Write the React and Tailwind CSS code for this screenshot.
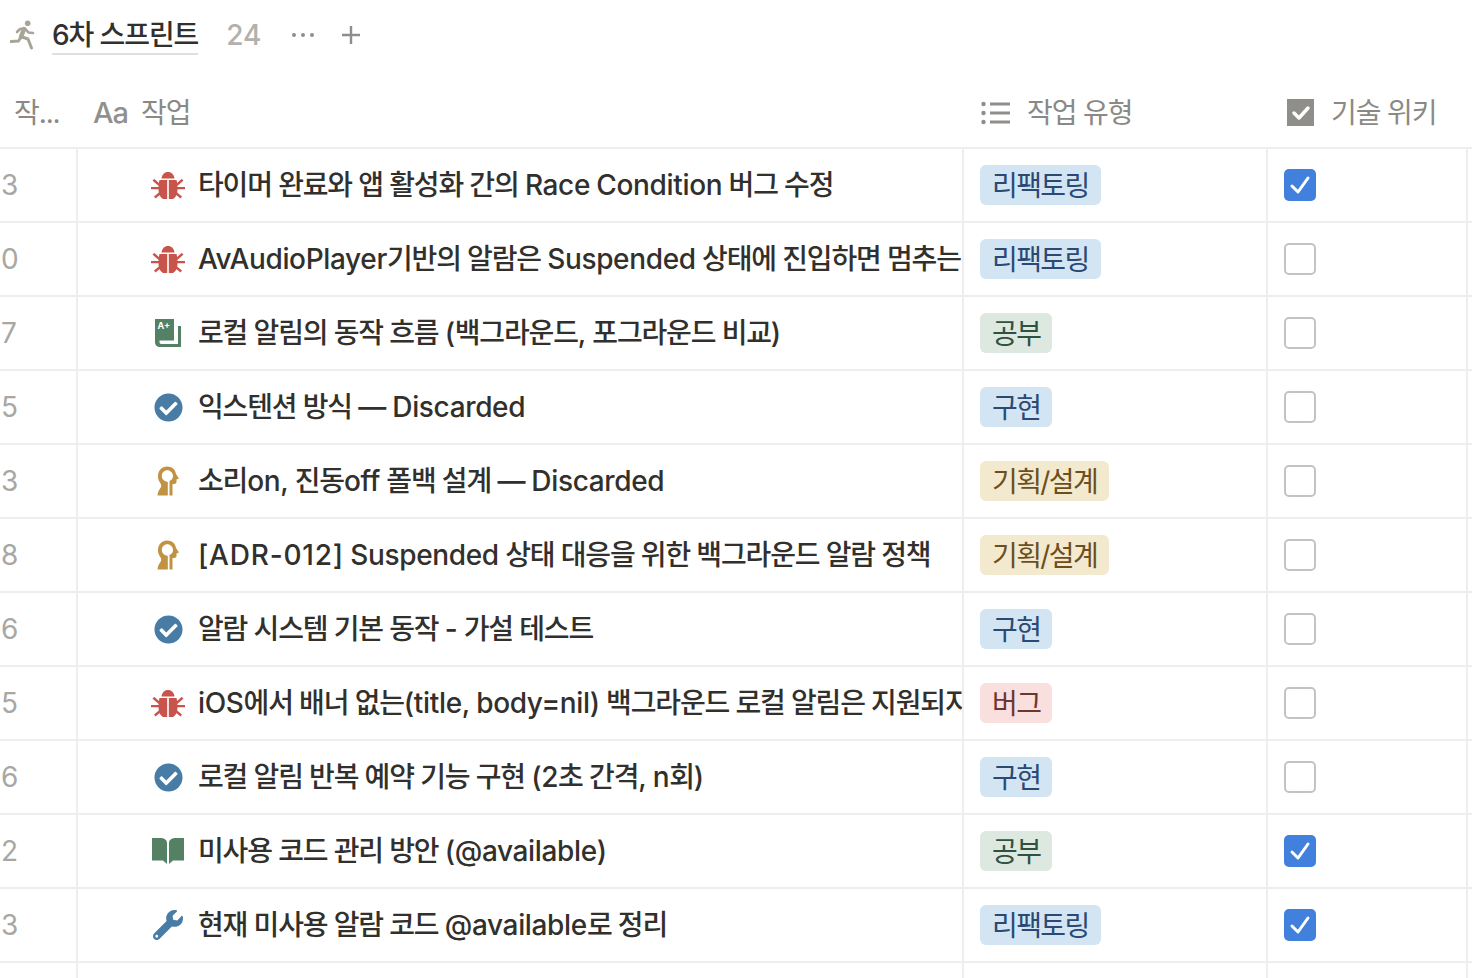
import { FaCheckCircle, FaWrench } from 'react-icons/fa';

const TAGS = {
  refactor: { label: '리팩토링', cls: 'bg-[#d3e5f3] text-[#2b4a73]' },
  study: { label: '공부', cls: 'bg-[#dde8e1] text-[#2f5140]' },
  impl: { label: '구현', cls: 'bg-[#d3e5f3] text-[#2b4a73]' },
  plan: { label: '기획/설계', cls: 'bg-[#f3e9cf] text-[#6b4f1d]' },
  bug: { label: '버그', cls: 'bg-[#f9e0de] text-[#6e3630]' },
};

const ROWS = [
  { num: '3', icon: 'bug', title: '타이머 완료와 앱 활성화 간의 Race Condition 버그 수정', tag: 'refactor', checked: true },
  { num: '0', icon: 'bug', title: 'AvAudioPlayer기반의 알람은 Suspended 상태에 진입하면 멈추는', tag: 'refactor' },
  { num: '7', icon: 'grade', title: '로컬 알림의 동작 흐름 (백그라운드, 포그라운드 비교)', tag: 'study' },
  { num: '5', icon: 'done', title: '익스텐션 방식 — Discarded', tag: 'impl' },
  { num: '3', icon: 'head', title: '소리on, 진동off 폴백 설계 — Discarded', tag: 'plan' },
  { num: '8', icon: 'head', title: '[ADR-012] Suspended 상태 대응을 위한 백그라운드 알람 정책', tag: 'plan' },
  { num: '6', icon: 'done', title: '알람 시스템 기본 동작 - 가설 테스트', tag: 'impl' },
  { num: '5', icon: 'bug', title: 'iOS에서 배너 없는(title, body=nil) 백그라운드 로컬 알림은 지원되지', tag: 'bug' },
  { num: '6', icon: 'done', title: '로컬 알림 반복 예약 기능 구현 (2초 간격, n회)', tag: 'impl' },
  { num: '2', icon: 'book', title: '미사용 코드 관리 방안 (@available)', tag: 'study', checked: true },
  { num: '3', icon: 'wrench', title: '현재 미사용 알람 코드 @available로 정리', tag: 'refactor', checked: true },
];

// Korean runs tighter than latin in the original, so the runs get their own tracking
function Title({ text }) {
  const parts = text.split(/([A-Za-z0-9@[\]=,.()—-]+)/);
  return parts.map((part, i) => {
    if (i % 2 === 0) return <span key={i} className="tracking-[-1.15px]">{part}</span>;
    if (part.startsWith('[ADR')) return <span key={i} className="tracking-[0.8px]">{part}</span>;
    return <span key={i} className="tracking-[-0.35px]">{part}</span>;
  });
}

function BugIcon() {
  return (
    <svg viewBox="0 0 34 30" className="w-[34px] h-[30px] text-[#c9544b]" fill="currentColor">
      <path d="M10.500 8.500C11 4.500 13.500 2 17 2s6 2.500 6.500 6.500z" />
      <path d="M8.500 10h7.700v19H12c-2.800-1.500-4.500-5-4.500-9.500 0-3.500.3-7 1-9.500z" />
      <path d="M25.500 10h-7.700v19H22c2.800-1.500 4.500-5 4.500-9.500 0-3.500-.3-7-1-9.500z" />
      <path d="M8.500 13.500 3.500 9l-2 1.300 1.200 1.400L7.800 16zM25.500 13.500 30.500 9l2 1.300-1.200 1.400L26.200 16z" />
      <path d="M0 17h8v2.200H0zM26 17h8v2.200h-8z" />
      <path d="M8.500 22 3 26.500 4.500 28.500l5.500-4.500zM25.500 22l5.500 4.500-1.500 2-5.500-4.500z" />
    </svg>
  );
}

function GradeIcon() {
  return (
    <svg viewBox="0 0 28 30" className="w-[28px] h-[30px]">
      <path d="M1 1h19v21.500H5.500V24c0 1 .600 2 1.800 2H24V8h3v21H6.500C3 29 1 27 1 24z" fill="#548164" />
      <text x="3.500" y="11" fontSize="9" fontWeight="700" fill="#fff" fontFamily="Inter, sans-serif">A+</text>
    </svg>
  );
}

function HeadIcon() {
  return (
    <svg viewBox="0 0 23 30" className="w-[23px] h-[30px] text-[#c29243]" fill="currentColor">
      <path d="M10 .5C15 .5 18.500 3.500 19 8l3 4.500-2.500 1V16c0 1.300-1 2-2.500 2h-1.500v11.500h-3V15c2.500-1 3.500-2.800 3.500-5 0-3.200-2.800-5.700-5.500-5.700C7 4.300 4.800 6.800 4.800 10c0 2.200 1.200 4 3 5l3 1v13.500H.5c0-4 2.500-6.500 3.500-8.500.5-1.500 0-3-1-4.500C1.500 14.500 1 12.500 1 10 1 4.500 5 .5 10 .5z" />
    </svg>
  );
}

function BookIcon() {
  return (
    <svg viewBox="0 0 32 26" className="w-[32px] h-[26px] text-[#548164]" fill="currentColor">
      <path d="M0 0h8c4 0 7 1.500 7 5v21l-4-3.500H0z" />
      <path d="M32 0h-8c-4 0-7 1.500-7 5v21l4-3.500h11z" />
    </svg>
  );
}

function RunnerIcon() {
  return (
    <svg viewBox="0 0 26 30" className="w-[26px] h-[30px] text-[#a8a596]" fill="none" stroke="currentColor" strokeLinejoin="round" strokeLinecap="round">
      <circle cx="17.700" cy="3.300" r="2.800" fill="currentColor" stroke="none" />
      <path d="M14 9 11 17" strokeWidth="4.500" />
      <path d="M7 12 10 9 15 8.500 18.500 12.500 23 13" strokeWidth="2.600" />
      <path d="M11 17 8.500 21 1 21.500" strokeWidth="3" />
      <path d="M11 16.500 18 19 21.500 28" strokeWidth="3" />
    </svg>
  );
}

function RowIcon({ type }) {
  if (type === 'bug') return <BugIcon />;
  if (type === 'grade') return <GradeIcon />;
  if (type === 'head') return <HeadIcon />;
  if (type === 'book') return <BookIcon />;
  if (type === 'wrench') return <FaWrench className="w-[30px] h-[30px] text-[#487ca5]" />;
  return <FaCheckCircle className="w-[29px] h-[29px] text-[#487ca5]" />;
}

function Checkbox({ checked }) {
  if (checked) {
    return (
      <div className="w-8 h-8 rounded-[5px] bg-[#4181dd] flex items-center justify-center">
        <svg viewBox="0 0 32 32" className="w-8 h-8" fill="none" stroke="#fff" strokeWidth="3" strokeLinecap="round" strokeLinejoin="round">
          <path d="M8 17l6 6 10-14" />
        </svg>
      </div>
    );
  }
  return <div className="w-8 h-8 rounded-[5px] border-2 border-[#c4c3c1]" />;
}

function Row({ row }) {
  const tag = TAGS[row.tag];
  return (
    <div className="flex h-[74px] border-b-2 border-[#efeeec]">
      <div className="w-[78px] shrink-0 border-r-2 border-[#efeeec] pl-[1px] flex items-center text-[28px] text-[#a8a7a3]">
        {row.num}
      </div>
      <div className="w-[886px] shrink-0 border-r-2 border-[#efeeec] flex items-center pl-[72px] overflow-hidden">
        <div className="w-[36px] shrink-0 flex items-center justify-center">
          <RowIcon type={row.icon} />
        </div>
        <span className="ml-[12px] text-[28px] font-medium text-[#32302c] whitespace-nowrap">
          <Title text={row.title} />
        </span>
      </div>
      <div className="w-[304px] shrink-0 border-r-2 border-[#efeeec] flex items-center pl-[16px]">
        <span className={`h-10 px-3 pt-[1px] rounded-[6px] flex items-center text-[28px] whitespace-nowrap tracking-[-1.6px] ${tag.cls}`}>
          {tag.label}
        </span>
      </div>
      <div className="w-[200px] shrink-0 border-r-2 border-[#efeeec] flex items-center pl-[16px]">
        <Checkbox checked={row.checked} />
      </div>
    </div>
  );
}

export default function App() {
  return (
    <div className="w-[1472px] h-[978px] overflow-hidden bg-white font-['Inter','Noto_Sans_CJK_KR',sans-serif]">
      {/* Title bar */}
      <div className="h-[70px] flex items-center pl-[10px]">
        <RunnerIcon />
        <span className="ml-[16px] text-[28px] font-medium leading-[36px] pt-[2px] tracking-[-1.1px] text-[#32302c] border-b-2 border-[#e0dfdc]">
          6차 스프린트
        </span>
        <span className="ml-[28px] text-[28px] font-medium text-[#b2b1ad]">24</span>
        <svg viewBox="0 0 24 6" className="ml-[30px] w-6 h-[6px]" fill="#8f8e8a">
          <circle cx="3" cy="3" r="2" />
          <circle cx="12" cy="3" r="2" />
          <circle cx="21" cy="3" r="2" />
        </svg>
        <svg viewBox="0 0 20 20" className="ml-[26px] w-5 h-5" fill="none" stroke="#8f8e8a" strokeWidth="2.400">
          <path d="M10 1v18M1 10h18" />
        </svg>
      </div>

      {/* Column header */}
      <div className="flex h-[79px] pt-[8px] border-b-2 border-[#efeeec] text-[28px] tracking-[-1.1px] text-[#8a8985]">
        <div className="w-[78px] shrink-0 flex items-center pl-[14px]">
          <span>작...</span>
        </div>
        <div className="w-[886px] shrink-0 flex items-center pl-[15px]">
          <span className="text-[29px] font-medium text-[#91908c] tracking-[-1px]">Aa</span>
          <span className="ml-[13px]">작업</span>
        </div>
        <div className="w-[304px] shrink-0 flex items-center pl-[17px]">
          <svg viewBox="0 0 30 24" className="w-[30px] h-6" fill="#8f8e8a">
            <circle cx="2.500" cy="3" r="2.200" />
            <circle cx="2.500" cy="12" r="2.200" />
            <circle cx="2.500" cy="21" r="2.200" />
            <rect x="9" y="1.500" width="20" height="3" />
            <rect x="9" y="10.500" width="20" height="3" />
            <rect x="9" y="19.500" width="20" height="3" />
          </svg>
          <span className="ml-[16px]">작업 유형</span>
        </div>
        <div className="w-[200px] shrink-0 flex items-center pl-[19px]">
          <svg viewBox="0 0 28 28" className="w-[28px] h-[28px]">
            <rect width="27" height="27" fill="#8f8e8a" />
            <path d="M7 14l5 5 9-10" fill="none" stroke="#fff" strokeWidth="3.500" strokeLinecap="round" strokeLinejoin="round" />
          </svg>
          <span className="ml-[16px]">기술 위키</span>
        </div>
      </div>

      {ROWS.map((row, i) => (
        <Row key={i} row={row} />
      ))}
      <div className="flex h-[20px]">
        <div className="w-[78px] border-r-2 border-[#efeeec]" />
        <div className="w-[886px] border-r-2 border-[#efeeec]" />
        <div className="w-[304px] border-r-2 border-[#efeeec]" />
        <div className="w-[200px] border-r-2 border-[#efeeec]" />
      </div>
    </div>
  );
}
